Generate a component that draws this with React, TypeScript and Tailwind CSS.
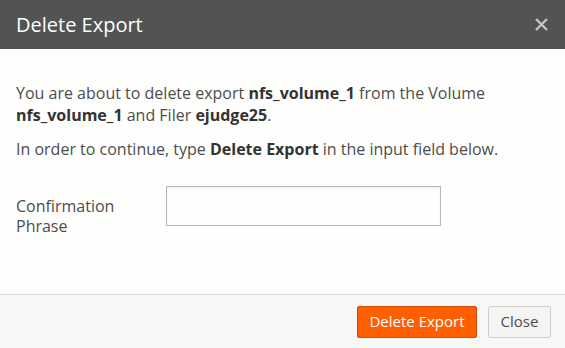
export default function App() {
  return (
    <div
      className="w-[565px] h-[348px] flex flex-col bg-[#fefefc] text-[#4d4d4d] overflow-hidden"
      style={{ fontFamily: '"Open Sans", sans-serif' }}
    >
      <div className="h-[49px] shrink-0 bg-[#525453] flex items-center justify-between pl-4 pr-4">
        <h2 className="text-[20px] text-white leading-none">Delete Export</h2>
        <button className="text-[#c4c5c4]" aria-label="Close">
          <svg width="15" height="15" viewBox="0 0 15 15" className="block">
            <path d="M2 2 L13 13 M13 2 L2 13" stroke="currentColor" strokeWidth="2.4" strokeLinecap="butt" />
          </svg>
        </button>
      </div>

      <div className="flex-1 px-4 pt-[33px]">
        <p className="text-[16px] leading-[22px] mb-[12px]">
          You are about to delete export <b className="font-bold text-[#333]">nfs_volume_1</b> from the Volume{" "}
          <b className="font-bold text-[#333]">nfs_volume_1</b> and Filer <b className="font-bold text-[#333]">ejudge25</b>.
        </p>
        <p className="text-[16px] leading-[22px]">
          In order to continue, type <b className="font-bold text-[#333]">Delete Export</b> in the input field below.
        </p>

        <div className="flex items-start mt-[26px]">
          <label className="w-[150px] text-[16px] leading-[20px] pt-[10px]">
            Confirmation
            <br />
            Phrase
          </label>
          <input
            type="text"
            className="w-[275px] h-[40px] border border-[#b9bab8] bg-[#fefefc] shadow-[inset_0_1px_2px_rgba(0,0,0,0.08)] outline-none"
          />
        </div>
      </div>

      <div className="h-[54px] shrink-0 border-t border-[#dcdcda] bg-[#f7f7f5] flex items-center justify-end gap-[11px] pr-[14px]">
        <button className="h-[32px] w-[120px] whitespace-nowrap bg-[#ff5f00] border border-[#d14e00] rounded-[2px] text-white text-[15px]">
          Delete Export
        </button>
        <button className="h-[32px] w-[63px] whitespace-nowrap bg-[#f4f4f2] border border-[#cfcfcd] rounded-[2px] text-[#4d4d4d] text-[15px]">
          Close
        </button>
      </div>
    </div>
  );
}
